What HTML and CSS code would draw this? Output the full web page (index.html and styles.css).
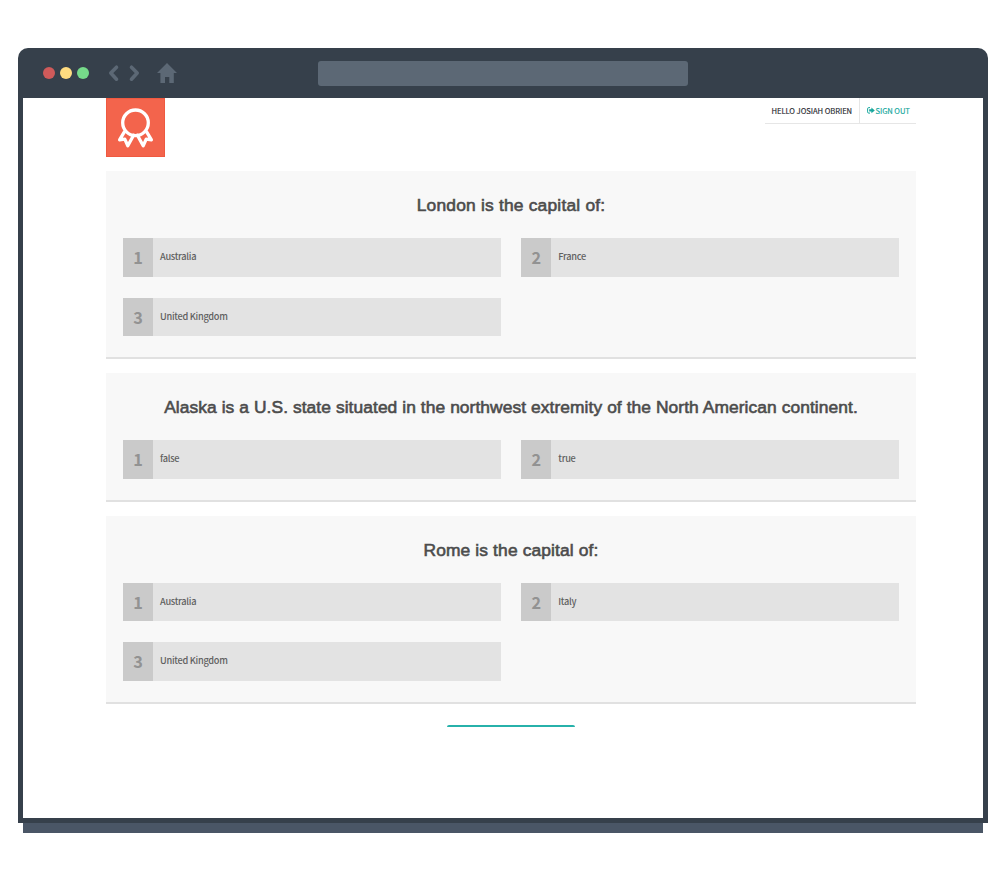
FILE: index.html
```
<!DOCTYPE html>
<html lang="en">
<head>
<meta charset="utf-8">
<title>Quiz</title>
<link rel="stylesheet" href="styles.css">
</head>
<body>
<div class="browser">
  <div class="toolbar">
    <div class="lights"><span class="light red"></span><span class="light yellow"></span><span class="light green"></span></div>
    <svg class="arrows" width="32" height="18" viewBox="0 0 32 18"><path d="M8.5 3.2 2.8 9l5.7 6.2M23.5 3.2 29.2 9l-5.7 6.2" fill="none" stroke="#5c6875" stroke-width="3.6" stroke-linecap="round" stroke-linejoin="round"/></svg>
    <svg class="home" width="20" height="20" viewBox="0 0 20 20"><path d="M10 0 20 10h-3.2v10h-4.5v-6H8v6H3.4V10H0z" fill="#5c6875"/></svg>
    <div class="address"></div>
  </div>
  <div class="page">
    <header class="header">
      <div class="logo">
        <svg width="59" height="59" viewBox="0 0 59 59" fill="none" stroke="#fff" stroke-width="3.3" stroke-linejoin="round" stroke-linecap="round"><circle cx="29.5" cy="24.8" r="12.8"/><path d="M18.2 34.2 13.6 41.8l5.2-.7 3 6.6 5.8-10.4M40.8 34.2l4.6 7.6-5.2-.7-3 6.6-5.8-10.4"/></svg>
      </div>
      <nav class="nav">
        <span class="hello">HELLO JOSIAH OBRIEN</span>
        <a class="signout"><svg width="8" height="7" viewBox="0 0 8 7"><path d="M3 .6H1.8Q.6.6.6 1.8v3.1q0 1.2 1.2 1.2H3" fill="none" stroke="#16a79d"/><path d="M2.2 2.3h2.2V.5L7.8 3.4 4.4 6.3V4.5H2.2z" fill="#16a79d"/></svg><span class="label">SIGN OUT</span></a>
      </nav>
    </header>
    <main class="questions">
      <section class="card">
        <h2><span class="q1">London is the capital of:</span></h2>
        <div class="options">
          <div class="option"><b>1</b><span>Australia</span></div>
          <div class="option"><b>2</b><span>France</span></div>
          <div class="option"><b>3</b><span>United Kingdom</span></div>
        </div>
      </section>
      <section class="card">
        <h2><span class="q2">Alaska is a U.S. state situated in the northwest extremity of the North American continent.</span></h2>
        <div class="options">
          <div class="option"><b>1</b><span>false</span></div>
          <div class="option"><b>2</b><span>true</span></div>
        </div>
      </section>
      <section class="card">
        <h2><span class="q3">Rome is the capital of:</span></h2>
        <div class="options">
          <div class="option"><b>1</b><span>Australia</span></div>
          <div class="option"><b>2</b><span>Italy</span></div>
          <div class="option"><b>3</b><span>United Kingdom</span></div>
        </div>
      </section>
    </main>
    <div class="submit"></div>
  </div>
</div>
<div class="base"></div>
</body>
</html>
```
FILE: styles.css
```
* { box-sizing: border-box; }
body { margin: 0; padding: 48px 18px 0; background: #fff; font-family: "Noto Sans CJK SC", "Noto Sans", sans-serif; }
.browser { width: 970px; height: 775px; background: #36404b; border-radius: 10px 10px 0 0; padding: 0 5px 5px; }
.toolbar { height: 50px; display: flex; align-items: center; padding-left: 20px; }
.lights { display: flex; gap: 5px; }
.light { width: 12px; height: 12px; border-radius: 50%; }
.red { background: #cf5a5a; }
.yellow { background: #ffdc80; }
.green { background: #76db8a; }
.arrows { margin-left: 19px; }
.home { margin-left: 17px; }
.address { width: 370px; height: 25px; margin-left: 141px; border-radius: 3px; background: #5c6875; }
.page { height: 720px; background: #fff; padding: 0 67px 0 83px; }
.header { height: 73.3px; display: flex; justify-content: space-between; align-items: flex-start; }
.logo { width: 59px; height: 59px; background: #f3644c; box-shadow: inset 0 0 0 1px #ef5940; }
.logo svg { display: block; }
.nav { display: flex; width: 151px; height: 26px; border-bottom: 1px solid #e6e6e6; font-size: 7.6px; line-height: 26px; white-space: nowrap; }
.hello { width: 95px; padding-left: 6.5px; border-right: 1px solid #e6e6e6; color: #2b2d33; letter-spacing: -.04px; -webkit-text-stroke: .15px; }
.signout { display: flex; align-items: center; gap: 1px; padding-left: 6.5px; color: #16a79d; letter-spacing: -.06px; -webkit-text-stroke: .15px; }
.questions { display: flex; flex-direction: column; gap: 14.2px; }
.card { background: #f8f8f8; border-bottom: 2px solid #e1e1e1; padding: 0 17px 21px; }
.card h2 { margin: 0; height: 67px; text-align: center; white-space: nowrap; font: 400 17.4px/69px "Liberation Sans", Arial, sans-serif; color: #4c4c4c; -webkit-text-stroke: .6px #4c4c4c; }
.q1 { letter-spacing: .2px; }
.q2 { letter-spacing: .07px; }
.q3 { letter-spacing: .13px; }
.options { display: grid; grid-template-columns: 377.5px 377.5px; gap: 21px 20.8px; }
.option { display: flex; height: 38.4px; background: #e3e3e3; }
.option b { width: 30px; background: #cacaca; color: #929292; font-size: 16.3px; line-height: 38px; text-align: center; }
.option span { padding-left: 7px; color: #606060; font-size: 9.2px; font-weight: 500; line-height: 36.4px; letter-spacing: -.27px; }
.submit { width: 128px; height: 2px; margin: 21px auto 0; border-radius: 2px 2px 0 0; background: #27b1aa; }
.base { width: 960px; height: 10px; margin-left: 5px; background: #4a5666; }
```
